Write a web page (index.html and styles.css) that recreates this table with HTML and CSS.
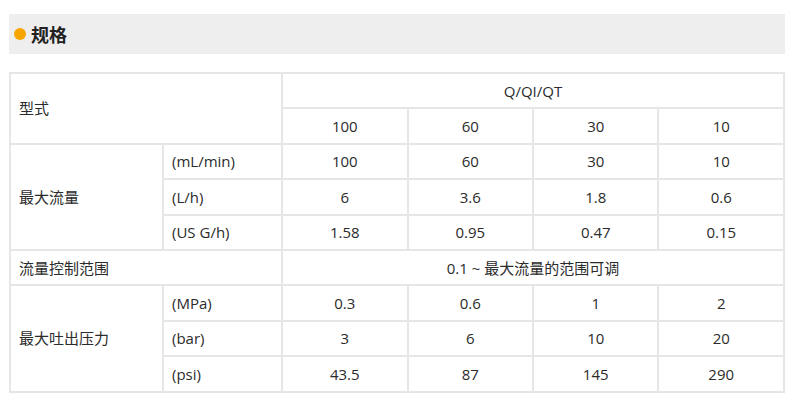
FILE: index.html
```html
<!DOCTYPE html>
<html lang="zh-CN">
<head>
<meta charset="utf-8">
<title>规格</title>
<link rel="stylesheet" href="styles.css">
</head>
<body>
<div class="page">
  <h2 class="section-title"><span class="dot"></span>规格</h2>
  <table class="spec">
    <colgroup>
      <col class="c-label"><col class="c-unit"><col class="c-val"><col class="c-val"><col class="c-val"><col class="c-val">
    </colgroup>
    <tr>
      <td colspan="2" rowspan="2" class="label">型式</td>
      <td colspan="4">Q/QI/QT</td>
    </tr>
    <tr><td>100</td><td>60</td><td>30</td><td>10</td></tr>
    <tr>
      <td rowspan="3" class="label">最大流量</td>
      <td class="label">(mL/min)</td><td>100</td><td>60</td><td>30</td><td>10</td>
    </tr>
    <tr><td class="label">(L/h)</td><td>6</td><td>3.6</td><td>1.8</td><td>0.6</td></tr>
    <tr><td class="label">(US G/h)</td><td>1.58</td><td>0.95</td><td>0.47</td><td>0.15</td></tr>
    <tr>
      <td colspan="2" class="label">流量控制范围</td>
      <td colspan="4">0.1 ~ 最大流量的范围可调</td>
    </tr>
    <tr>
      <td rowspan="3" class="label">最大吐出压力</td>
      <td class="label">(MPa)</td><td>0.3</td><td>0.6</td><td>1</td><td>2</td>
    </tr>
    <tr><td class="label">(bar)</td><td>3</td><td>6</td><td>10</td><td>20</td></tr>
    <tr><td class="label">(psi)</td><td>43.5</td><td>87</td><td>145</td><td>290</td></tr>
  </table>
</div>
</body>
</html>
```
FILE: styles.css
```css
html, body {
  margin: 0;
  padding: 0;
  background: #fff;
}
body {
  font-family: "Open Sans", "Noto Sans CJK SC", sans-serif;
  color: #2b2b2b;
  font-size: 15px;
}
.page {
  padding: 14px 0 0 9px;
  width: 776px;
}
.section-title {
  margin: 0;
  height: 40px;
  background: #eeeeee;
  display: flex;
  align-items: center;
  gap: 5px;
  padding-left: 5px;
  font-family: "Noto Sans CJK SC", sans-serif;
  font-size: 18px;
  font-weight: 700;
  color: #222;
}
.dot {
  width: 12px;
  height: 12px;
  border-radius: 50%;
  background: #f7a600;
  flex: none;
}
.spec {
  margin-top: 18px;
  width: 776px;
  border-collapse: collapse;
  table-layout: fixed;
  border: 2px solid #e6e6e6;
}
.c-label { width: 153px; }
.c-unit { width: 119px; }
.spec td {
  border: 2px solid #e6e6e6;
  height: 33.4px;
  padding: 0 8px;
  text-align: center;
  vertical-align: middle;
  line-height: 20px;
}
.spec td.label {
  text-align: left;
}
```
